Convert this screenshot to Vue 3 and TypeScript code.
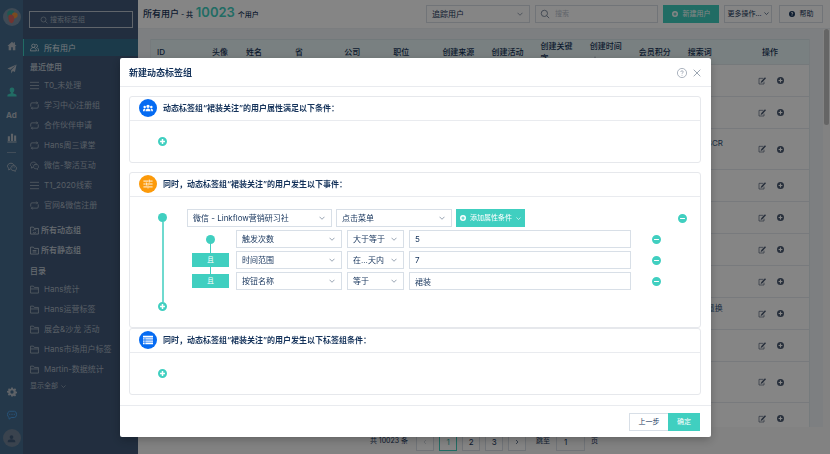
<script setup lang="ts">
import { ref, reactive, h, type FunctionalComponent } from 'vue'

interface Shape { d: string; fill?: boolean; w?: number }

const shapes: Record<string, Shape> = {
  search: { d: 'M10.500 3a7.500 7.500 0 1 0 0 15a7.500 7.500 0 1 0 0-15M16 16l6 6', w: 2 },
  down: { d: 'M2 7l10 10l10-10', w: 3 },
  left: { d: 'M16 4l-8 8l8 8', w: 2.5 },
  right: { d: 'M8 4l8 8l-8 8', w: 2.5 },
  close: { d: 'M2 2l20 20M22 2L2 22', w: 2.4 },
  home: { d: 'M12 2L1 12h3v10h6v-7h4v7h6V12h3l-4-3.600V3h-3v2.700z', fill: true },
  send: { d: 'M23 1L1 11l7 3zM23 1L10 15v8l4-6l5 2z', fill: true },
  person: { d: 'M12 1c-4 0-6 3-5.500 6.500c.3 2.500 1.500 4.500 3 5.500v2L2 18c-1 .5-1 2-1 5h22c0-3 0-4.500-1-5l-7.500-3v-2c1.500-1 2.700-3 3-5.500C18 4 16 1 12 1z', fill: true },
  bars: { d: 'M2 8h5v11H2zM9.500 2h5v17h-5zM17 6h5v13h-5zM1 20.500h22V23H1z', fill: true },
  wechat: { d: 'M8 17l-4 2l.5-3.500C-2 11 2 3 9.500 3c4 0 7 2.500 7.500 5.500M16 9c-9 0-9 11-1 11.500l2 .2l3 1.800v-2.500C25 16 23 9 16 9zM7 8v1M12 8v1M14 13v1M18 13v1', w: 2 },
  gear: { d: 'M10 1h4l.6 3l2 .9l2.600-1.700l2.800 2.800l-1.700 2.600l.8 2l2.900.6v3.600l-3 .7l-.8 2l1.700 2.500l-2.800 2.800l-2.600-1.700l-2 .8L14 23h-4l-.6-3.100l-2-.8l-2.600 1.700L2 18l1.700-2.500l-.8-2L0 13v-3.600l3-.7l.8-2L2 6l2.800-2.800L7.400 4.900l2-.9zM12 8a4 4 0 1 0 0 8a4 4 0 1 0 0-8z', fill: true },
  chat: { d: 'M6 3h12q5 1 5 7.500t-5 7.500h-8l-5 4v-4q-4-2-4-7.500T6 3zM6.500 9v3M12 9v3M17.500 9v3', w: 2.4 },
  avatar: { d: 'M12 3a5 5 0 1 0 0 10a5 5 0 1 0 0-10zM2 22v-3c0-3 5-5 10-5s10 2 10 5v3z', fill: true },
  users: { d: 'M9 3a4.500 4.500 0 1 0 0 9a4.500 4.500 0 1 0 0-9M1 21c0-12 16-12 16 0zM14.500 4a4 4 0 1 1 2.500 8c4 1 6 4 6 9h-3', w: 2.2 },
  list: { d: 'M0 3.500h24M0 12h24M0 20.500h24', w: 2 },
  cycle: { d: 'M2 15V8q0-3 3-3h15M17 1.500L20.500 5L17 8.500M22 9v7q0 3-3 3H4M7 15.500L3.500 19L7 22.500', w: 2 },
  folder: { d: 'M1.500 21.500V3H9l2.500 3.500h11v15zM1.500 10.500h21', w: 2 },
  folderSync: { d: 'M1.500 21.500V3H9l2.500 3.500h11v15zM8 12.500c2-4 6-4 8-1M16 15.500c-2 4-6 4-8 1', w: 2 },
  folderLine: { d: 'M1.500 21.500V3H9l2.500 3.500h11v15zM7 12h10M7 16h10', w: 2 },
  plus: { d: 'M12 0a12 12 0 1 0 0 24a12 12 0 1 0 0-24zM10 5.500h4V10h4.500v4H14v4.500h-4V14H5.500v-4H10z', fill: true },
  minus: { d: 'M12 0a12 12 0 1 0 0 24a12 12 0 1 0 0-24zM5.500 10.500h13v3h-13z', fill: true },
  help: { d: 'M12 0a12 12 0 1 0 0 24a12 12 0 1 0 0-24zM7 9c0-6 10-6 10 0c0 3-3.500 3-3.500 5.500h-3c0-4 3.500-4 3.500-5.500c0-2-4-2-4 0zM10.500 16.500h3v3h-3z', fill: true },
  helpRing: { d: 'M12 1a11 11 0 1 0 0 22a11 11 0 1 0 0-22M9 9.500c0-4 6-4 6 0c0 2-3 2-3 4.500M12 16.500v2', w: 1.6 },
  edit: { d: 'M16 4H3v17h15v-7' },
  pencil: { d: 'M21 1l3 3L13 16l-5 2l1.500-5.500z', fill: true },
  team: { d: 'M12 4a4 4 0 1 0 0 8a4 4 0 1 0 0-8zM6 20c0-9 12-9 12 0zM4 6.500a3 3 0 1 0 0 6a3 3 0 1 0 0-6zM20 6.500a3 3 0 1 0 0 6a3 3 0 1 0 0-6zM0 20c0-5 1-6.500 4-6.500l2 1c-1 1-2 3-2 5.500zM24 20c0-5-1-6.500-4-6.500l-2 1c1 1 2 3 2 5.500z', fill: true },
  sliders: { d: 'M1 5h12M17 5h6M15 1.500v7M1 12h5M10 12h13M8 8.500v7M1 19h9M14 19h9M12 15.500v7', w: 2.2 },
  sheet: { d: 'M0 2h24v4H0zM0 8h4v3H0zM5.500 8H24v3H5.500zM0 13h4v3H0zM5.500 13H24v3H5.500zM0 18h4v4H0zM5.500 18H24v4H5.500z', fill: true },
}

const Icon: FunctionalComponent<{ name: string }> = (props) => {
  const s = shapes[props.name]
  return h('svg', { viewBox: '0 0 24 24', 'aria-hidden': 'true' }, [
    h('path', {
      d: s.d,
      fill: s.fill ? 'currentColor' : 'none',
      'fill-rule': 'evenodd',
      stroke: s.fill ? 'none' : 'currentColor',
      'stroke-width': s.w ?? 2,
    }),
  ])
}
Icon.props = ['name']

const recent = [
  { icon: 'list', text: 'T0_未处理' },
  { icon: 'cycle', text: '学习中心注册组' },
  { icon: 'cycle', text: '合作伙伴申请' },
  { icon: 'cycle', text: 'Hans周三课堂' },
  { icon: 'wechat', text: '微信-黎活互动' },
  { icon: 'list', text: 'T1_2020线索' },
  { icon: 'cycle', text: '官网&微信注册' },
]
const groups = [
  { icon: 'folderSync', text: '所有动态组' },
  { icon: 'folderLine', text: '所有静态组' },
]
const folders = ['Hans统计', 'Hans运营标签', '展会&沙龙 活动', 'Hans市场用户标签', 'Martin-数据统计']

const columns = ['ID', '头像', '姓名', '省', '公司', '职位', '创建来源', '创建活动', '创建关键字', '创建时间', '会员积分', '搜索词']
const rows = [
  { word: '' }, { word: '' }, { word: 'SCR', tall: true }, { word: '' }, { word: '' }, { word: '' },
  { word: '' }, { word: '量换' }, { word: '' }, { word: '', tall: true }, { word: '' },
]

const source = ref('微信 - Linkflow营销研习社')
const action = ref('点击菜单')
const conditions = reactive([
  { field: '触发次数', op: '大于等于', value: '5' },
  { field: '时间范围', op: '在...天内', value: '7' },
  { field: '按钮名称', op: '等于', value: '裙装' },
])
const page = ref(1)
const jump = ref('1')
</script>

<template>
  <div class="app">
    <nav class="rail">
      <svg class="logo" viewBox="0 0 38 38">
        <circle cx="19" cy="19" r="19" fill="#7a8ea3" />
        <path d="M17 5c-6 0-9 4-8 9l3 12l6-8l6-10c-1-2-4-3-7-3z" fill="#3aa59c" />
        <path d="M19 13c1-5 11-5 12 1c0 5-4 8-8 8l-4-2z" fill="#e8913d" />
        <path d="M12 15c4-3 9-1 11 3c2 6-1 14-5 14c-6 0-8-11-6-17z" fill="#d9635c" />
      </svg>
      <a href="#" aria-label="主页"><Icon name="home" /></a>
      <a href="#" aria-label="营销"><Icon name="send" /></a>
      <a href="#" class="on" aria-label="用户"><Icon name="person" /></a>
      <a href="#" class="ad">Ad</a>
      <a href="#" aria-label="报表"><Icon name="bars" /></a>
      <hr />
      <a href="#" aria-label="微信"><Icon name="wechat" /></a>
      <a href="#" class="gear" aria-label="设置"><Icon name="gear" /></a>
      <a href="#" class="talk" aria-label="消息"><Icon name="chat" /></a>
      <a href="#" class="me" aria-label="账号"><Icon name="avatar" /></a>
    </nav>

    <aside class="side">
      <label class="side-search"><Icon name="search" /><input type="text" placeholder="搜索标签组" aria-label="搜索标签组" /></label>
      <a href="#" class="item active"><Icon name="users" />所有用户</a>
      <h2>最近使用</h2>
      <a v-for="r in recent" :key="r.text" href="#" class="item"><Icon :name="r.icon" />{{ r.text }}</a>
      <div class="groups">
        <a v-for="g in groups" :key="g.text" href="#" class="item strong"><Icon :name="g.icon" />{{ g.text }}</a>
      </div>
      <h2>目录</h2>
      <a v-for="f in folders" :key="f" href="#" class="item"><Icon name="folder" />{{ f }}</a>
      <button type="button" class="more">显示全部 <Icon name="down" /></button>
    </aside>

    <main class="main">
      <header class="top">
        <h1>所有用户<small> - 共 <b>10023</b> 个用户</small></h1>
        <span class="pick track">
          <select aria-label="用户类型"><option>追踪用户</option></select><Icon name="down" />
        </span>
        <label class="find"><Icon name="search" /><input type="text" placeholder="搜索" aria-label="搜索" /></label>
        <button type="button" class="btn teal create"><Icon name="plus" />新建用户</button>
        <button type="button" class="btn ops">更多操作... <Icon name="down" /></button>
        <button type="button" class="btn aid"><Icon name="help" />帮助</button>
      </header>

      <div class="scroller">
        <div class="sheet">
          <table>
            <thead>
              <tr>
                <th v-for="(c, i) in columns" :key="c" :class="{ id: i === 0, pic: i === 1 }">
                  {{ c }}<span v-if="c === '创建时间'" class="sort"></span>
                </th>
                <th class="act">操作</th>
              </tr>
            </thead>
            <tbody>
              <tr v-for="(r, i) in rows" :key="i" :class="{ tall: r.tall }">
                <td v-for="n in 11" :key="n"></td>
                <td class="word"><template v-if="r.word">{{ r.word }}<br />&nbsp;</template></td>
                <td class="act">
                  <span class="tools">
                    <button type="button" aria-label="编辑" class="edit"><svg viewBox="0 0 24 24"><path :d="shapes.edit.d" fill="none" stroke="currentColor" stroke-width="2" /><path :d="shapes.pencil.d" fill="currentColor" /></svg></button>
                    <button type="button" aria-label="添加"><Icon name="plus" /></button>
                  </span>
                </td>
              </tr>
            </tbody>
          </table>
        </div>
        <div class="track-bar"><i></i></div>
      </div>

      <footer class="pager">
        <span class="total">共 10023 条</span>
        <button type="button" class="dim" aria-label="上一页"><Icon name="left" /></button>
        <button v-for="n in 3" :key="n" type="button" :class="{ current: n === page }" @click="page = n">{{ n }}</button>
        <button type="button" aria-label="下一页"><Icon name="right" /></button>
        <label class="jump">跳至 <input v-model="jump" type="text" /> 页</label>
      </footer>
    </main>

    <div class="mask">
      <section class="dialog" role="dialog" aria-labelledby="dialog-title">
        <header class="dialog-head">
          <h2 id="dialog-title">新建动态标签组</h2>
          <button type="button" aria-label="帮助" class="ring"><Icon name="helpRing" /></button>
          <button type="button" aria-label="关闭" class="x"><Icon name="close" /></button>
        </header>

        <div class="dialog-body">
          <section class="card">
            <h3><span class="disc blue"><Icon name="team" /></span>动态标签组“裙装关注”的用户属性满足以下条件：</h3>
            <div class="empty"><button type="button" class="dot-btn" aria-label="添加条件"><Icon name="plus" /></button></div>
          </section>

          <section class="card spaced">
            <h3><span class="disc orange"><Icon name="sliders" /></span>同时，动态标签组“裙装关注”的用户发生以下事件：</h3>
            <div class="events">
              <div class="timeline">
                <span class="dot"></span>
                <span class="line"></span>
                <button type="button" class="dot-btn" aria-label="添加事件"><Icon name="plus" /></button>
              </div>
              <div class="rules">
                <div class="rule">
                  <span class="pick source">
                    <select v-model="source" aria-label="事件来源"><option>微信 - Linkflow营销研习社</option></select><Icon name="down" />
                  </span>
                  <span class="pick action">
                    <select v-model="action" aria-label="事件"><option>点击菜单</option></select><Icon name="down" />
                  </span>
                  <button type="button" class="btn teal attr"><Icon name="plus" />添加属性条件 <Icon name="down" class="chev" /></button>
                  <button type="button" class="dot-btn end" aria-label="删除事件"><Icon name="minus" /></button>
                </div>
                <div v-for="(c, i) in conditions" :key="c.field" class="rule sub">
                  <div class="lead">
                    <span v-if="i === 0" class="dot"></span>
                    <span v-else class="and">且</span>
                  </div>
                  <span class="pick field">
                    <select v-model="c.field" aria-label="属性"><option>{{ c.field }}</option></select><Icon name="down" />
                  </span>
                  <span class="pick op">
                    <select v-model="c.op" aria-label="比较方式"><option>{{ c.op }}</option></select><Icon name="down" />
                  </span>
                  <input v-model="c.value" type="text" class="value" aria-label="值" />
                  <button type="button" class="dot-btn drop" aria-label="删除条件"><Icon name="minus" /></button>
                </div>
              </div>
            </div>
          </section>

          <section class="card">
            <h3><span class="disc blue"><Icon name="sheet" /></span>同时，动态标签组“裙装关注”的用户发生以下标签组条件：</h3>
            <div class="empty"><button type="button" class="dot-btn" aria-label="添加标签组条件"><Icon name="plus" /></button></div>
          </section>
        </div>

        <footer class="dialog-foot">
          <button type="button" class="btn back">上一步</button>
          <button type="button" class="btn teal ok">确定</button>
        </footer>
      </section>
    </div>
  </div>
</template>

<style>
body { margin: 0; overflow: hidden; }
</style>

<style scoped>
.app, .app :deep(*) { box-sizing: border-box; }
.app {
  display: flex;
  height: 100vh;
  overflow: hidden;
  font: 8px/12px Inter, "Noto Sans CJK SC", sans-serif;
  color: #17355a;
}
.app :deep(svg) { display: block; flex: none; }
h1, h2, h3 { margin: 0; font-weight: 600; }
a { color: inherit; text-decoration: none; }
button, input, select { margin: 0; padding: 0; font: inherit; color: inherit; border: 0; border-radius: 0; background: none; outline: 0; }
button { display: flex; align-items: center; justify-content: center; }
input, select { min-width: 0; }

/* icon rail */
.rail { display: flex; flex-direction: column; align-items: center; width: 23px; padding: 8px 0 7px; background: #456c8e; color: #b4bcc6; }
.rail a { display: flex; align-items: center; justify-content: center; height: 23px; }
.rail a svg { width: 10px; height: 10px; }
.rail .logo { width: 18px; height: 18px; margin-bottom: 8px; }
.rail .on { color: #40cfc0; }
.rail .ad { font-weight: 700; }
.rail hr { width: 9px; height: 1px; margin: 3px 0 2px; border: 0; background: #7e95ab; }
.rail .gear { margin-top: auto; }
.rail .talk { color: #4b9ee6; }
.rail a.me { width: 18px; height: 18px; margin-top: 3px; border-radius: 50%; background: #6f8196; color: #3f5878; }
.rail a.me svg { width: 9px; height: 9px; }

/* group list */
.side { width: 115px; padding-top: 11px; overflow: hidden; background: #415979; color: #aab5c2; white-space: nowrap; }
.side-search { display: flex; align-items: center; gap: 2px; height: 17px; margin: 0 5px 11px 6px; padding-left: 10px; border: 1px solid #b9c2cd; font-size: 7px; }
.side-search svg { width: 8px; height: 8px; }
.side-search input { flex: 1; }
.side-search input::placeholder { color: #a3afbd; opacity: 1; }
.side h2 { height: 19px; padding: 5px 0 0 7px; font-size: 8px; line-height: 12px; color: #c3ccd6; font-weight: 500; }
.item { display: flex; align-items: center; gap: 5px; height: 20px; padding-left: 7px; }
.item svg { width: 9px; height: 9px; }
.item.active { height: 17px; padding-left: 6px; border-left: 1px solid #40cfc0; background: #35708f; color: #dfe5ec; }
.item.strong { gap: 2px; font-weight: 500; color: #c3ccd6; }
.groups { margin-top: 5px; }
.side .more { gap: 3px; height: 14px; padding-left: 7px; font-size: 7px; }
.more svg { width: 5px; height: 5px; }

/* user list */
.main { display: flex; flex-direction: column; flex: 1; min-width: 0; background: #fff; }
.top { display: flex; align-items: center; gap: 5px; height: 29px; padding: 0 7px 1px 5px; border-bottom: 1px solid #eceff4; }
.top h1 { margin-right: auto; font-size: 9px; line-height: 20px; font-weight: 500; white-space: nowrap; }
.top small { font-size: 7px; }
.top b { margin: 0 1px; font-size: 13px; font-weight: 600; color: #40cfc0; }
.pick { position: relative; display: flex; height: 18px; border: 1px solid #d8dfe7; background: #fff; }
.pick select { flex: 1; width: 100%; padding: 0 14px 0 5px; appearance: none; text-overflow: ellipsis; }
.pick svg { position: absolute; top: 5px; right: 6px; width: 6px; height: 6px; color: #77869a; pointer-events: none; }
.track { width: 104px; }
.find { display: flex; align-items: center; gap: 5px; width: 123px; height: 18px; padding-left: 4px; border: 1px solid #d8dfe7; font-size: 7px; }
.find svg { width: 10px; height: 10px; color: #6b7b90; }
.find input { flex: 1; }
.find input::placeholder { color: #bcc4ce; opacity: 1; }
.btn { height: 18px; border: 1px solid #d8dfe7; background: #fff; font-size: 7px; white-space: nowrap; gap: 5px; }
.btn svg { width: 6px; height: 6px; }
.btn.teal { border-color: #40cfc0; background: #40cfc0; color: #fff; }
.create { width: 56px; }
.ops { width: 48px; gap: 2px; }
.btn.ops svg { width: 5px; height: 5px; }
.aid { width: 44px; margin-left: 2px; }

.scroller { display: flex; flex: 1; min-height: 0; background: #f0f3f8; }
.sheet { flex: 1; min-width: 0; margin: 10px 13px 0 12px; overflow: hidden; background: #fff; }
.track-bar { width: 7px; padding: 0 1px; background: #fafafa; }
.track-bar i { display: block; height: 24%; border-radius: 3px; background: #c1c1c1; }
table { width: 100%; border-collapse: separate; border-spacing: 0; table-layout: fixed; border: 1px solid #e3ebf0; border-top: 0; }
th { height: 25px; padding: 0 7px 0 6px; border-top: 1px solid #dbe8ec; border-bottom: 1px solid #e0e8ec; background: #e9f6f7; font-weight: 500; text-align: left; line-height: 12px; }
th.id { width: 55px; }
th.pic { width: 34px; padding-right: 0; }
th.act { width: 78px; padding: 0; text-align: center; }
.sort { display: block; width: 0; margin: 4px 0 4px 3px; border: 2px solid transparent; border-top: 0; border-bottom: 4px solid #b5bfca; }
td { height: 32px; padding: 0; border-bottom: 1px solid #e6eaf0; }
.tall td { height: 41px; }
td.word { padding-left: 25px; white-space: nowrap; color: #33547a; }
.tools { display: flex; align-items: center; justify-content: center; gap: 11px; padding-left: 2px; color: #4b5a72; }
.tools svg { width: 7px; height: 7px; }
.tools .edit svg { width: 8px; height: 8px; }

.pager { display: flex; align-items: flex-start; justify-content: center; gap: 5px; height: 27px; padding-top: 6px; background: #fafafa; font-size: 7px; line-height: 16px; }
.pager button { width: 18px; height: 18px; border: 1px solid #d8dfe7; font-size: 8px; background: #fff; }
.pager button svg { width: 6px; height: 6px; }
.pager button.current { border-color: #40cfc0; color: #2fbdb0; }
.pager button.dim { color: #bcc4ce; }
.total { margin-right: 3px; }
.jump { display: flex; gap: 6px; margin-left: 5px; }
.jump input { width: 29px; height: 18px; padding-left: 7px; border: 1px solid #d8dfe7; font-size: 8px; }

/* dialog */
.mask { position: fixed; inset: 0; padding: 58px 119px 0 120px; background: rgba(0, 0, 0, 0.48); }
.dialog { border-radius: 2px; background: #fff; box-shadow: 0 3px 10px rgba(0, 0, 0, 0.25); color: #14325a; }
.dialog-head { display: flex; align-items: center; height: 29px; padding: 1px 10px 0 9px; border-bottom: 1px solid #e9ebef; }
.dialog-head h2 { margin-right: auto; font-size: 9px; }
.dialog-head button { color: #8490a0; }
.ring svg { width: 10px; height: 10px; }
.x { margin-left: 6px; }
.x svg { width: 8px; height: 8px; }
.dialog-body { padding: 9px 10px 10px 9px; }
.card { border: 1px solid #e6e8ec; border-radius: 3px; }
.card.spaced { margin-top: 9px; }
.card h3 { display: flex; align-items: center; gap: 6px; height: 24px; padding: 0 0 1px 9px; border-bottom: 1px solid #e9ebef; font-size: 8px; }
.disc { display: flex; align-items: center; justify-content: center; width: 18px; height: 18px; border-radius: 50%; color: #fff; }
.disc svg { width: 10px; height: 10px; }
.blue { background: #056bf2; }
.orange { background: #fc9a0a; }
.empty { display: flex; align-items: center; height: 41px; padding-left: 28px; }
.dot-btn { flex: none; width: 9px; height: 9px; color: #40cfc0; }
.dot-btn svg { width: 9px; height: 9px; }
.dot { flex: none; width: 9px; height: 9px; border-radius: 50%; background: #40cfc0; }
.events { display: flex; gap: 20px; padding: 12px 13px 16px 28px; }
.timeline { display: flex; flex-direction: column; align-items: center; width: 9px; padding-top: 4px; }
.line { flex: 1; width: 2px; background: #6fdacf; }
.rules { display: flex; flex: 1; flex-direction: column; gap: 3px; min-width: 0; padding-bottom: 21px; }
.rule { display: flex; align-items: center; gap: 4px; height: 18px; }
.source { width: 145px; }
.action { width: 116px; }
.attr { width: 69px; gap: 4px; }
.btn.attr .chev { width: 5px; height: 5px; }
.end { margin-left: auto; }
.rule.sub { gap: 5px; padding: 0 26px 0 5px; }
.lead { position: relative; display: flex; align-items: center; justify-content: center; width: 37px; height: 18px; margin-right: 2px; }
.sub:not(:last-child) .lead::after { content: ""; position: absolute; top: 9px; left: 18px; width: 1px; height: 21px; background: #40cfc0; }
.and { position: relative; z-index: 1; width: 37px; height: 14px; background: #40cfc0; color: #fff; font-size: 7px; line-height: 14px; text-align: center; }
.field { width: 106px; }
.op { width: 57px; }
.value { flex: 1; height: 18px; padding: 0 5px; border: 1px solid #d8dfe7; }
.drop { margin-left: 16px; }
.dialog-foot { display: flex; align-items: center; justify-content: flex-end; height: 32px; padding: 0 11px 0 0; border-top: 1px solid #e9ebef; }
.back { width: 39px; border-right: 0; }
.ok { width: 32px; }
</style>
